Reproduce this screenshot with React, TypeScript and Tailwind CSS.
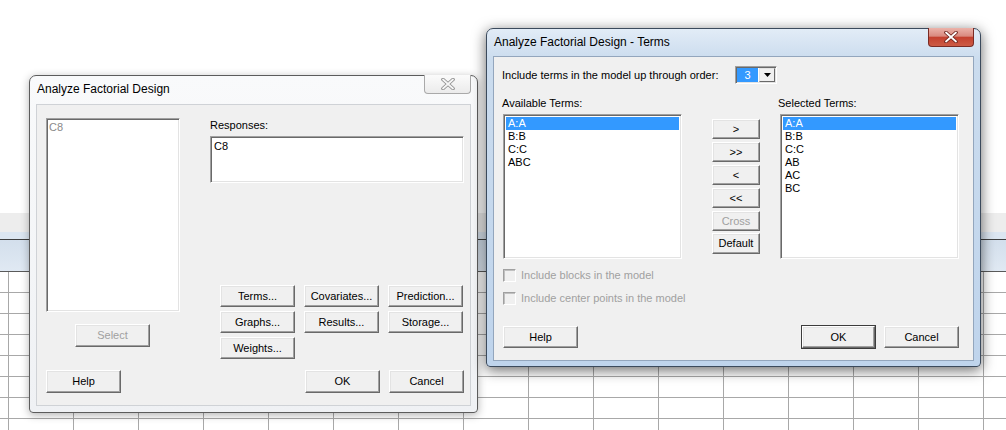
import React from "react";

const ui = "font-['Liberation_Sans',Arial,sans-serif]";

function Btn({
  children,
  w = "w-[75px]",
  h = "h-[22px]",
  disabled = false,
}: {
  children: React.ReactNode;
  w?: string;
  h?: string;
  disabled?: boolean;
}) {
  return (
    <div
      className={`${w} ${h} shrink-0 flex items-center justify-center bg-[#f0f0f0] border border-t-white border-l-white border-b-[#696969] border-r-[#696969] shadow-[inset_-1px_-1px_0_#a0a0a0,inset_1px_1px_0_#e3e3e3] text-[11px] leading-none ${
        disabled ? "text-[#a0a0a0]" : "text-black"
      }`}
    >
      {children}
    </div>
  );
}

function Sunken({ className, children }: { className: string; children?: React.ReactNode }) {
  return (
    <div
      className={`bg-white border border-t-[#a0a0a0] border-l-[#a0a0a0] border-b-white border-r-white shadow-[inset_1px_1px_0_#696969,inset_-1px_-1px_0_#e3e3e3] ${className}`}
    >
      {children}
    </div>
  );
}

function TermList({ items }: { items: string[] }) {
  return (
    <Sunken className="w-[179px] h-[145px] p-[2px] pt-[2px]">
      {items.map((t, i) => (
        <div
          key={t}
          className={`h-[13px] leading-[13px] text-[11px] pl-[2px] ${
            i === 0 ? "bg-[#3399ff] text-white" : "text-black"
          }`}
        >
          {t}
        </div>
      ))}
    </Sunken>
  );
}

function Check({ label }: { label: string }) {
  return (
    <div className="h-[16px] flex items-center">
      <div className="ml-[1px] w-[13px] h-[13px] bg-[#f0f0f0] border border-t-[#a0a0a0] border-l-[#a0a0a0] border-b-white border-r-white shadow-[inset_1px_1px_0_#c0c0c0]" />
      <span className="ml-[5px] text-[11px] text-[#a0a0a0]">{label}</span>
    </div>
  );
}

function CloseX({ outline, fill }: { outline: string; fill: string }) {
  return (
    <svg width="14" height="12" viewBox="0 0 14 12">
      <path d="M2 1.5 L12 10.5 M12 1.5 L2 10.5" stroke={outline} strokeWidth="3.6" strokeLinecap="round" />
      <path d="M2 1.5 L12 10.5 M12 1.5 L2 10.5" stroke={fill} strokeWidth="1.8" strokeLinecap="round" />
    </svg>
  );
}

function Desktop() {
  return (
    <div className="w-[1006px] h-[430px] flex flex-col bg-white">
      <div className="h-[213px] bg-white" />
      <div className="h-[19px] bg-[#ededed]" />
      <div className="h-[7px] bg-[#dce6f1]" />
      <div className="h-px bg-[#3f3f3f]" />
      <div className="h-[31px] bg-[linear-gradient(to_bottom,#d3dfec,#e0e9f3)]" />
      <div className="flex-1 border-t border-[#5a5a5a] bg-white bg-[linear-gradient(to_right,#a8a8a8_1px,transparent_1px),linear-gradient(to_bottom,#a8a8a8_1px,transparent_1px)] bg-[size:65px_21px] bg-[position:8px_20px]" />
    </div>
  );
}

function AnalyzeDialog() {
  return (
    <div className="absolute left-[29px] top-[75px] w-[449px] flex flex-col px-[6px] pb-[6px] border border-[#5c5c5c] rounded-t-[7px] rounded-b-[4px] bg-[linear-gradient(to_bottom,#f9fafb,#eff1f4)] shadow-[0_2px_9px_rgba(0,0,0,0.3)]">
      <div className="h-[28px] flex items-start justify-between">
        <div className="pt-[6px] pl-[1px] leading-[15px] text-[12px] text-black">Analyze Factorial Design</div>
        <div className="-mt-px w-[47px] h-[19px] flex items-center justify-center border border-t-0 border-[#a9a9a9] rounded-b-[4px] bg-[linear-gradient(to_bottom,#fbfbfb,#ebebeb)]">
          <CloseX outline="#8c8c8c" fill="#f6f6f6" />
        </div>
      </div>
      <div className="border border-[#cfd2d6] bg-[#f0f0f0] pl-[9px] pr-[6px] pt-[13px] pb-[12px] flex flex-col">
        <div className="flex">
          <div className="w-[134px] flex flex-col">
            <Sunken className="h-[194px] px-[2px] pt-[2px]">
              <div className="text-[11px] leading-[13px] text-[#8a8a8a]">C8</div>
            </Sunken>
            <div className="mt-[12px] ml-[29px]">
              <Btn disabled h="h-[23px]">
                Select
              </Btn>
            </div>
          </div>
          <div className="ml-[30px] flex-1 flex flex-col">
            <div className="h-[14px] leading-[14px] text-[11px] text-black">Responses:</div>
            <Sunken className="mt-[4px] h-[47px] px-[3px] pt-[3px]">
              <div className="text-[11px] leading-[13px] text-black">C8</div>
            </Sunken>
            <div className="mt-[102px] ml-[10px] grid grid-cols-[75px_75px_75px] gap-x-[9px] gap-y-[4px]">
              <Btn>Terms...</Btn>
              <Btn>Covariates...</Btn>
              <Btn>Prediction...</Btn>
              <Btn>Graphs...</Btn>
              <Btn>Results...</Btn>
              <Btn>Storage...</Btn>
              <Btn>Weights...</Btn>
            </div>
          </div>
        </div>
        <div className="mt-[11px] flex items-center">
          <Btn h="h-[23px]">Help</Btn>
          <div className="ml-auto flex gap-[9px]">
            <Btn h="h-[23px]">OK</Btn>
            <Btn h="h-[23px]">Cancel</Btn>
          </div>
        </div>
      </div>
    </div>
  );
}

function TermsDialog() {
  return (
    <div className="absolute left-[486px] top-[28px] w-[495px] flex flex-col px-[6px] pb-[5px] border border-[#3b4a5c] rounded-t-[7px] rounded-b-[4px] bg-[linear-gradient(to_bottom,#e2ecf7,#cbdcee_30px,#bfd4ec)] shadow-[0_3px_14px_rgba(0,0,0,0.6)]">
      <div className="h-[27px] flex items-start justify-between">
        <div className="pt-[6px] pl-[1px] leading-[15px] text-[12px] text-black">Analyze Factorial Design - Terms</div>
        <div className="-mt-px w-[46px] h-[19px] flex items-center justify-center border border-t-0 border-[#7a2b24] rounded-b-[4px] bg-[linear-gradient(to_bottom,#ebb3aa,#d98a7f_45%,#c4412f_52%,#cc5b45)]">
          <CloseX outline="#6b231c" fill="#ffffff" />
        </div>
      </div>
      <div className="border border-[#93a6bd] bg-[#f0f0f0] pl-[8px] pr-[14px] pt-[9px] pb-[11px] flex flex-col">
        <div className="h-[18px] flex items-center">
          <div className="w-[233px] text-[11px] text-black">Include terms in the model up through order:</div>
          <Sunken className="w-[42px] h-[18px] flex items-stretch p-px">
            <div className="w-[21px] bg-[#3399ff] text-white text-[11px] leading-[14px] flex items-center justify-center">3</div>
            <div className="ml-auto w-[16px] bg-[#f0f0f0] border border-t-[#e3e3e3] border-l-[#e3e3e3] border-b-[#696969] border-r-[#696969] flex items-center justify-center">
              <svg width="7" height="4" viewBox="0 0 7 4">
                <path d="M0 0 H7 L3.5 4 Z" fill="#000" />
              </svg>
            </div>
          </Sunken>
        </div>
        <div className="mt-[12px] flex">
          <div className="ml-[1px] flex flex-col">
            <div className="-ml-px h-[14px] leading-[14px] text-[11px] text-black">Available Terms:</div>
            <div className="mt-[4px]">
              <TermList items={["A:A", "B:B", "C:C", "ABC"]} />
            </div>
          </div>
          <div className="ml-[30px] mt-[23px] flex flex-col gap-[3px]">
            <Btn w="w-[48px]" h="h-[20px]">&gt;</Btn>
            <Btn w="w-[48px]" h="h-[20px]">&gt;&gt;</Btn>
            <Btn w="w-[48px]" h="h-[20px]">&lt;</Btn>
            <Btn w="w-[48px]" h="h-[20px]">&lt;&lt;</Btn>
            <Btn w="w-[48px]" h="h-[20px]" disabled>Cross</Btn>
            <div className="-mt-px">
              <Btn w="w-[48px]" h="h-[21px]">Default</Btn>
            </div>
          </div>
          <div className="ml-[18px] flex flex-col">
            <div className="h-[14px] leading-[14px] text-[11px] text-black">Selected Terms:</div>
            <div className="mt-[4px] ml-[2px]">
              <TermList items={["A:A", "B:B", "C:C", "AB", "AC", "BC"]} />
            </div>
          </div>
        </div>
        <div className="mt-[8px]">
          <Check label="Include blocks in the model" />
        </div>
        <div className="mt-[7px]">
          <Check label="Include center points in the model" />
        </div>
        <div className="mt-[19px] h-[24px] flex items-center pl-px">
          <Btn>Help</Btn>
          <div className="ml-auto flex gap-[8px]">
            <div className="border border-[#3c3c3c]">
              <Btn w="w-[73px]">OK</Btn>
            </div>
            <div className="py-px">
              <Btn>Cancel</Btn>
            </div>
          </div>
        </div>
      </div>
    </div>
  );
}

export default function App() {
  return (
    <div className={`relative w-[1006px] h-[430px] overflow-hidden ${ui}`}>
      <Desktop />
      <AnalyzeDialog />
      <TermsDialog />
    </div>
  );
}
